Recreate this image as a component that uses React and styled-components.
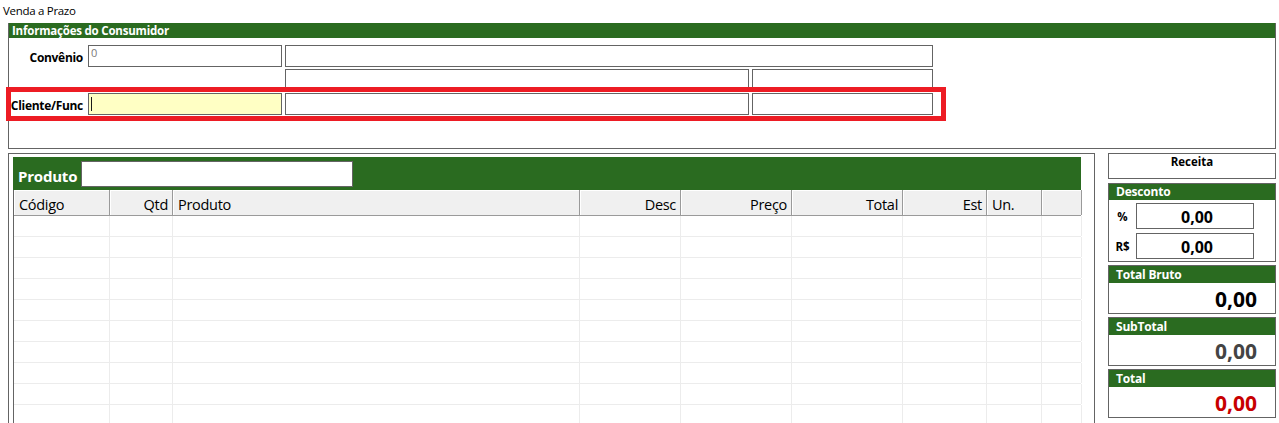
import React from "react";
import styled, { createGlobalStyle } from "styled-components";

const GlobalStyle = createGlobalStyle`
  html, body {
    margin: 0;
    padding: 0;
    background: #ffffff;
    overflow: hidden;
  }
  body {
    font-family: "Open Sans", "Noto Sans", "Liberation Sans", sans-serif;
    color: #000;
  }
`;

const GREEN = "#2a6b20";
const BORDER = "#646464";

const columns = [
  { key: "codigo", label: "Código", width: 96, align: "left" },
  { key: "qtd", label: "Qtd", width: 63, align: "right" },
  { key: "produto", label: "Produto", width: 407, align: "left" },
  { key: "desc", label: "Desc", width: 101, align: "right" },
  { key: "preco", label: "Preço", width: 111, align: "right" },
  { key: "total", label: "Total", width: 111, align: "right" },
  { key: "est", label: "Est", width: 84, align: "right" },
  { key: "un", label: "Un.", width: 55, align: "left" },
  { key: "extra", label: "", width: 40, align: "left" },
];

const Page = styled.div`
  width: 1279px;
  height: 423px;
  overflow: hidden;
`;

const Title = styled.div`
  height: 23px;
  padding-left: 3px;
  font-size: 11.5px;
  line-height: 22px;
  letter-spacing: -0.3px;
`;

const ConsumerPanel = styled.section`
  position: relative;
  margin-left: 8px;
  width: 1268px;
  height: 126px;
  box-sizing: border-box;
  border: 1px solid ${BORDER};
  border-top: none;
`;

const PanelHeader = styled.div`
  height: ${(p) => p.h || 15}px;
  background: ${GREEN};
  color: #fff;
  font-weight: 700;
  font-size: ${(p) => p.fs || 11.5}px;
  line-height: ${(p) => p.h || 15}px;
  padding-left: ${(p) => p.pl || 3}px;
  letter-spacing: -0.2px;
  white-space: nowrap;
`;

const ConsumerBody = styled.div`
  display: flex;
  flex-direction: column;
  gap: 2px;
  padding-top: 7px;
`;

const FieldRow = styled.div`
  display: flex;
  align-items: center;
  height: 22px;
  gap: 3px;
`;

const FieldLabel = styled.div`
  width: 74px;
  margin-right: 2px;
  padding-top: 3px;
  text-align: right;
  font-weight: 700;
  font-size: 12px;
  letter-spacing: -0.3px;
  white-space: nowrap;
`;

const TextBox = styled.div`
  position: relative;
  width: ${(p) => p.w}px;
  height: 22px;
  box-sizing: border-box;
  border: 1px solid ${BORDER};
  background: ${(p) => (p.active ? "#ffffc4" : "#fff")};
  flex-shrink: 0;
`;

const Spacer = styled.div`
  width: ${(p) => p.w}px;
  flex-shrink: 0;
`;

const BoxText = styled.span`
  position: absolute;
  left: 2px;
  top: -1px;
  font-size: 11px;
  color: #7a7a7a;
`;

const Caret = styled.span`
  position: absolute;
  left: 2px;
  top: 3px;
  width: 1px;
  height: 14px;
  background: #1a1a1a;
`;

const Highlight = styled.div`
  position: absolute;
  left: -3px;
  top: 64px;
  width: 940px;
  height: 34px;
  box-sizing: border-box;
  border: 5px solid #ed1c24;
  pointer-events: none;
`;

const Lower = styled.div`
  display: flex;
  align-items: flex-start;
  gap: 13px;
  margin: 4px 0 0 8px;
`;

const ProductPanel = styled.section`
  width: 1087px;
  height: 300px;
  box-sizing: border-box;
  border: 1px solid ${BORDER};
  padding: 3px 13px 0 4px;
`;

const ProductBar = styled.div`
  display: flex;
  align-items: center;
  height: 33px;
  background: ${GREEN};
  gap: 4px;
`;

const ProductLabel = styled.div`
  padding: 5px 0 0 5px;
  color: #fff;
  font-weight: 700;
  font-size: 15px;
  letter-spacing: -0.2px;
`;

const ProductInput = styled.div`
  width: 272px;
  height: 26px;
  margin-top: 1px;
  box-sizing: border-box;
  border: 1px solid ${BORDER};
  background: #fff;
`;

const Grid = styled.div`
  border-left: 1px solid ${BORDER};
`;

const GridRow = styled.div`
  display: flex;
  height: ${(p) => (p.header ? 25 : 20)}px;
  background: ${(p) => (p.header ? "#f0f0f0" : "#fff")};
  border-bottom: 1px solid ${(p) => (p.header ? "#9a9a9a" : "#ececec")};
`;

const HeaderCell = styled.div`
  width: ${(p) => p.w}px;
  flex-shrink: 0;
  box-sizing: border-box;
  border-right: 1px solid #9a9a9a;
  box-shadow: inset 1px 1px 0 #ffffff;
  padding: 0 ${(p) => (p.align === "right" ? 4 : 5)}px;
  text-align: ${(p) => p.align};
  font-size: 14.5px;
  line-height: 29px;
  letter-spacing: -0.3px;
  white-space: nowrap;
  overflow: hidden;
`;

const BodyCell = styled.div`
  width: ${(p) => p.w}px;
  flex-shrink: 0;
  box-sizing: border-box;
  border-right: 1px solid #ececec;
`;

const SideColumn = styled.aside`
  display: flex;
  flex-direction: column;
  width: 168px;
`;

const ReceitaBox = styled.div`
  height: 26px;
  box-sizing: border-box;
  border: 1px solid ${BORDER};
  text-align: center;
  font-weight: 700;
  font-size: 11.5px;
  line-height: 16px;
`;

const SideBox = styled.div`
  box-sizing: border-box;
  border: 1px solid ${BORDER};
  height: ${(p) => p.h}px;
  margin-top: ${(p) => p.mt}px;
  display: flex;
  flex-direction: column;
`;

const DiscountRows = styled.div`
  display: flex;
  flex-direction: column;
  gap: 4px;
  padding-top: 3px;
`;

const DiscountRow = styled.div`
  display: flex;
  align-items: center;
`;

const DiscountLabel = styled.div`
  width: 27px;
  text-align: center;
  font-weight: 700;
  font-size: 11.5px;
`;

const DiscountInput = styled.div`
  width: 118px;
  height: 26px;
  box-sizing: border-box;
  border: 1px solid ${BORDER};
  text-align: center;
  font-weight: 700;
  font-size: 16px;
  line-height: 26px;
  padding-left: 4px;
`;

const TotalValue = styled.div`
  flex: 1;
  display: flex;
  align-items: flex-end;
  justify-content: flex-end;
  padding-right: 18px;
  font-weight: 700;
  font-size: 21px;
  line-height: 27px;
  color: ${(p) => p.color};
`;

const totals = [
  { label: "Total Bruto", color: "#000000", mt: 3 },
  { label: "SubTotal", color: "#444444", mt: 3 },
  { label: "Total", color: "#c80000", mt: 3 },
];

const App = () => {
  const rows = Array.from({ length: 12 });

  return (
    <Page>
      <GlobalStyle />
      <Title>Venda a Prazo</Title>

      <ConsumerPanel>
        <PanelHeader>Informações do Consumidor</PanelHeader>
        <ConsumerBody>
          <FieldRow>
            <FieldLabel>Convênio</FieldLabel>
            <TextBox w={194}>
              <BoxText>0</BoxText>
            </TextBox>
            <TextBox w={648} />
          </FieldRow>
          <FieldRow>
            <FieldLabel />
            <Spacer w={194} />
            <TextBox w={464} />
            <TextBox w={181} />
          </FieldRow>
          <FieldRow>
            <FieldLabel>Cliente/Func</FieldLabel>
            <TextBox w={194} active>
              <Caret />
            </TextBox>
            <TextBox w={464} />
            <TextBox w={181} />
          </FieldRow>
        </ConsumerBody>
        <Highlight />
      </ConsumerPanel>

      <Lower>
        <ProductPanel>
          <ProductBar>
            <ProductLabel>Produto</ProductLabel>
            <ProductInput />
          </ProductBar>
          <Grid>
            <GridRow header>
              {columns.map((c) => (
                <HeaderCell key={c.key} w={c.width} align={c.align}>
                  {c.label}
                </HeaderCell>
              ))}
            </GridRow>
            {rows.map((_, i) => (
              <GridRow key={i}>
                {columns.map((c) => (
                  <BodyCell key={c.key} w={c.width} />
                ))}
              </GridRow>
            ))}
          </Grid>
        </ProductPanel>

        <SideColumn>
          <ReceitaBox>Receita</ReceitaBox>

          <SideBox h={79} mt={4}>
            <PanelHeader h={16} pl={7} fs={12}>
              Desconto
            </PanelHeader>
            <DiscountRows>
              <DiscountRow>
                <DiscountLabel>%</DiscountLabel>
                <DiscountInput>0,00</DiscountInput>
              </DiscountRow>
              <DiscountRow>
                <DiscountLabel>R$</DiscountLabel>
                <DiscountInput>0,00</DiscountInput>
              </DiscountRow>
            </DiscountRows>
          </SideBox>

          {totals.map((t) => (
            <SideBox key={t.label} h={49} mt={t.mt}>
              <PanelHeader h={17} pl={7} fs={12}>
                {t.label}
              </PanelHeader>
              <TotalValue color={t.color}>0,00</TotalValue>
            </SideBox>
          ))}
        </SideColumn>
      </Lower>
    </Page>
  );
};

export default App;
